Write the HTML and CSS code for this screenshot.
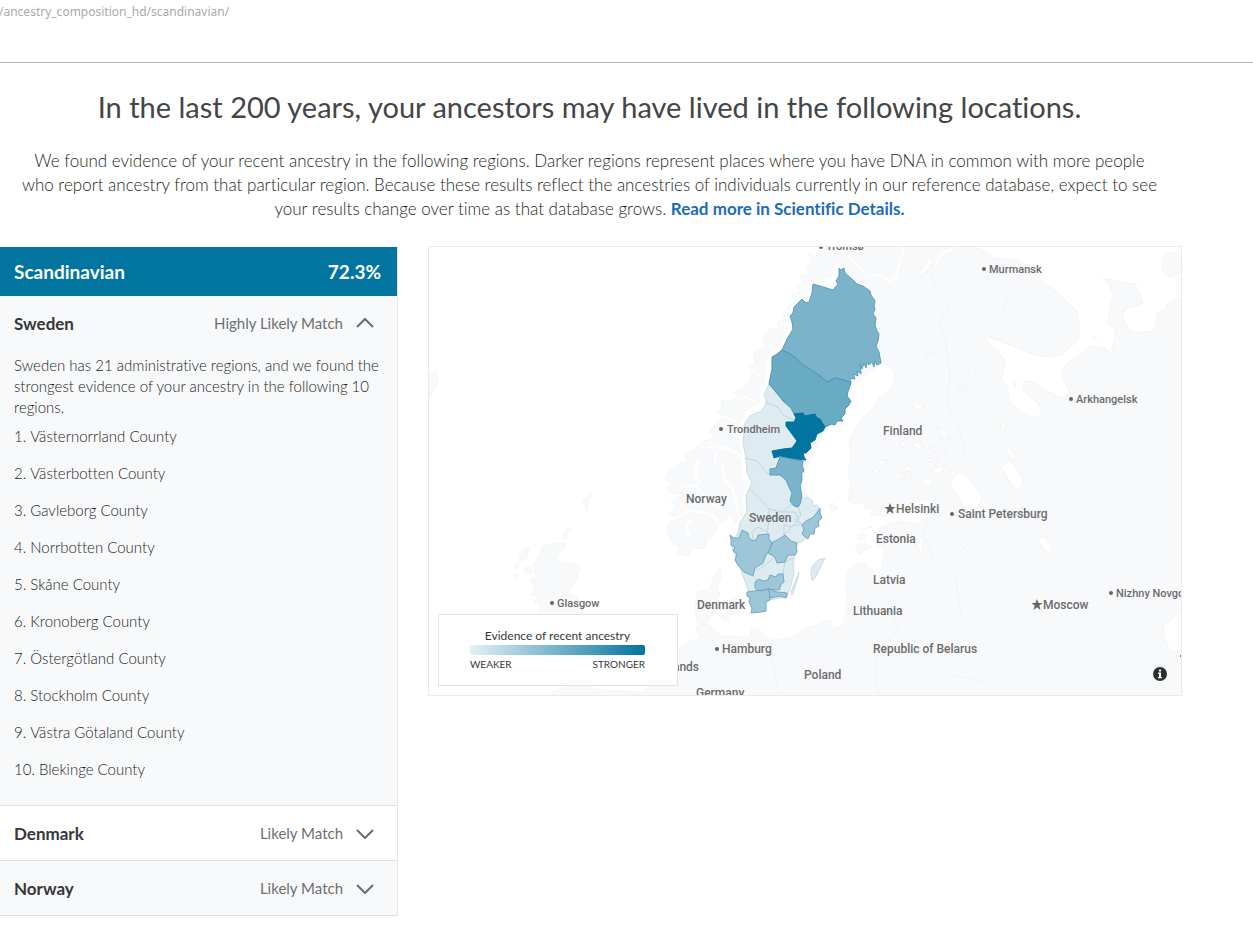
FILE: index.html
```
<!DOCTYPE html>
<html lang="en">
<head>
  <meta charset="UTF-8" />
  <title>Ancestry Composition - Scandinavian</title>
  <link rel="stylesheet" href="styles.css">
</head>
<body>
  <header class="topbar">
    <span class="path">/ancestry_composition_hd/scandinavian/</span>
  </header>

  <main class="page">
    <section class="intro">
      <h1>In the last 200 years, your ancestors may have lived in the following locations.</h1>
      <p>We found evidence of your recent ancestry in the following regions. Darker regions represent places where you have DNA in common with more people<br>
      who report ancestry from that particular region. Because these results reflect the ancestries of individuals currently in our reference database, expect to see<br>
      your results change over time as that database grows. <a href="#details">Read more in Scientific Details.</a></p>
    </section>

    <div class="columns">
      <!-- Country list -->
      <section class="populations">
        <h2 class="population-title"><span>Scandinavian</span><span>72.3%</span></h2>

        <div class="country shaded">
          <button class="country-toggle" type="button" aria-expanded="true">
            <span class="country-name">Sweden</span>
            <span class="match">Highly Likely Match</span>
            <svg class="chevron" viewBox="0 0 18 12"><path d="M1 10 9 2 17 10" /></svg>
          </button>
          <div class="country-body">
            <p>Sweden has 21 administrative regions, and we found the strongest evidence of your ancestry in the following 10 regions.</p>
            <ol>
              <li>Västernorrland County</li>
              <li>Västerbotten County</li>
              <li>Gavleborg County</li>
              <li>Norrbotten County</li>
              <li>Skåne County</li>
              <li>Kronoberg County</li>
              <li>Östergötland County</li>
              <li>Stockholm County</li>
              <li>Västra Götaland County</li>
              <li>Blekinge County</li>
            </ol>
          </div>
        </div>

        <div class="country">
          <button class="country-toggle" type="button" aria-expanded="false">
            <span class="country-name">Denmark</span>
            <span class="match">Likely Match</span>
            <svg class="chevron" viewBox="0 0 18 12"><path d="M1 3 9 11 17 3" /></svg>
          </button>
        </div>

        <div class="country shaded">
          <button class="country-toggle" type="button" aria-expanded="false">
            <span class="country-name">Norway</span>
            <span class="match">Likely Match</span>
            <svg class="chevron" viewBox="0 0 18 12"><path d="M1 3 9 11 17 3" /></svg>
          </button>
        </div>
      </section>

      <!-- Map -->
      <section class="map">
        <svg class="map-canvas" viewBox="429 247 752 448" role="img" aria-label="Map of northern Europe">
          <g class="land">
            <!-- Norway, Finland, Russia -->
            <path d="M832 240 826 248 829 253 820 251 816 257 808 254 811 262 806 267 810 273 800 276 804 283 797 287 800 293 791 294 796 301 788 306 790 314 783 311 785 320 777 322 779 330 770 328 765 334 762 340 766 346 758 350 753 353 755 362 749 368 752 374 749 382 743 389 734 392 737 398 727 402 721 400 722 408 717 413 724 418 714 424 709 432 715 438 703 441 698 446 692 451 685 455 687 461 677 465 668 472 665 480 674 483 666 488 672 494 682 494 671 501 676 507 669 514 678 517 668 524 667 534 672 543 680 546 678 553 689 556 693 549 705 548 708 539 716 532 718 524 725 520 730 512 738 527 750 580 790 590 800 540 815 510 800 480 830 420 855 385 881 363 888 365 893 371 894 382 889 391 880 397 873 408 862 419 855 430 849 440 851 454 848 470 851 484 848 500 854 504 862 502 866 509 875 508 870 514 883 516 895 512 905 505 914 503 930 498 937 504 928 511 935 516 925 518 918 524 904 521 891 523 882 527 874 533 874 544 884 550 882 567 878 576 869 568 866 563 857 563 848 571 846 583 847 596 846 614 843 625 832 630 831 620 818 624 806 628 792 637 775 640 765 637 758 627 751 630 750 638 737 636 720 636 713 627 702 623 696 628 700 638 687 642 680 648 673 650 665 655 670 670 655 680 640 695 640 700 1190 700 1190 240Z" />
            <path d="M697 592 710 589 713 578 720 568 721 577 717 588 720 594 715 602 716 613 707 619 708 626 697 622 695 607Z" />
            <path d="M724 604 735 598 744 602 739 613 728 615ZM720 615 730 618 726 622Z" />
            <!-- Scotland and islands -->
            <path d="M543 546 552 544 566 543 563 550 556 557 561 563 575 563 581 568 578 576 572 585 568 592 577 597 582 608 585 616 537 616 540 605 534 603 539 594 531 596 536 586 529 581 536 575 534 565 538 557Z" />
            <path d="M519 556 524 549 530 547 527 557 520 563ZM524 568 530 567 533 573 526 573ZM514 575 518 574 517 580ZM515 563 519 566 516 570ZM563 533 568 528 567 536 563 541ZM568 528 573 529 570 532ZM583 500 587 497 592 493 588 502 588 513 584 506Z" />
            <path d="M552 692 565 688 580 683 600 690 640 692 640 700 552 700ZM429 375 435 371 439 380 434 391 429 398Z" />
            <path d="M828 506 834 503 838 508 832 512ZM857 535 864 534 867 538 860 541ZM855 546 864 543 872 547 864 551 860 555Z" />
          </g>
          <g class="water">
            <path d="M975 247 983 251 990 253 993 258 1008 259 1020 261 1030 267 1037 274 1047 285 1062 296 1069 304 1077 311 1078 320 1080 329 1078 339 1072 346 1062 354 1050 357 1037 355 1027 352 1014 347 1000 341 988 337 982 329 976 325 984 335 990 346 998 351 1005 361 1002 379 1008 388 1008 401 1023 413 1035 418 1040 415 1042 409 1036 401 1028 396 1023 389 1024 382 1030 381 1047 391 1062 398 1070 393 1062 374 1066 364 1073 359 1082 354 1092 346 1107 349 1112 356 1112 347 1116 336 1114 328 1108 324 1110 310 1113 296 1110 286 1103 278 1120 282 1135 284 1139 292 1143 303 1134 306 1125 309 1122 317 1130 330 1137 333 1153 331 1156 324 1157 313 1167 309 1166 304 1182 298 1190 240 975 240Z" />
            <path d="M960 472 966 477 973 483 978 491 982 497 979 505 974 510 963 507 959 496 950 486 952 479ZM1002 445 1008 448 1013 453 1015 459 1013 461 1010 455 1006 450ZM1001 467 1008 461 1013 463 1017 471 1023 480 1022 486 1017 490 1010 482ZM1038 540 1044 536 1052 548 1050 554 1045 550ZM920 537 923 536 922 550 927 558 920 553 917 544ZM961 551 965 549 967 552 963 554ZM919 274 930 257 933 258 930 267 922 276ZM957 353 961 355 963 361 958 358ZM967 363 972 366 976 373 970 370ZM912 400 918 404 925 407 916 410ZM988 430 994 429 995 434 990 434ZM1000 418 1005 425 1006 431 1001 426ZM938 426 946 432 949 439 941 434Z" />
            <path d="M902 441 907 440 905 446 900 449ZM912 439 916 443 923 445 921 449 914 447ZM925 459 933 458 932 462 926 461ZM921 479 928 478 934 482 929 486 923 484ZM932 470 941 467 945 464 943 471 936 474ZM941 450 946 449 944 456ZM905 468 909 466 913 470 908 471ZM896 464 900 462 897 470 901 479 896 478ZM873 470 877 468 880 473 876 474ZM878 461 887 460 883 464 879 465ZM882 476 885 480 881 485Z" />
            <path d="M1181 610 1173 618 1163 627 1164 638 1170 650 1181 654Z" />
            <path class="island" d="M1162 262 1165 254 1175 252 1183 258 1180 273 1169 277 1162 271Z" />
          </g>
          <g class="fjord">
            <path class="border" d="M845 272 838 266 834 281 815 283 809 300 801 297 792 311 791 329 781 349 770 355 768 383 762 394 763 404 748 413 743 425 743 443 745 461 745 475 751 484 745 495 746 512 739 524 735 534" />
            <path d="M843 250 852 259 858 266 867 276 880 275 889 281 895 278 903 253 902 247M936 266 940 254 950 250 955 247" />
            <path d="M706 448 716 446 728 449 737 453 743 459M682 487 695 485 701 492 708 500 722 509M698 460 695 472 700 485M722 463 725 480 733 490 736 500 739 518M674 520 687 511 703 512 714 516 718 522M715 463 716 452M690 538 686 528 691 519M760 377 752 370 747 371M736 421 724 417 716 419M757 402 745 397 737 399M775 350 768 345M793 326 784 324M803 298 797 295" />
          </g>
          <g class="edge">
            <path d="M931 275 936 290 948 305 940 326 946 345 950 375 947 402 960 432 965 452 945 476M860 614 890 612 900 629 880 648 874 672 879 694M928 512 924 535 935 562 955 573 961 614M1000 295 1007 298 1003 311M972 335 978 340 968 344M925 355 938 350 927 358ZM955 385 970 385 962 393ZM773 640 772 660 779 694M950 675 975 679 998 686" />
            <path d="M1093 336 1097 337 1095 339ZM1013 382 1016 382 1015 387ZM1052 477 1049 484M1055 518 1061 523M860 530 872 527M908 452 900 457 897 462M921 434 918 440 923 442 921 446 928 449 936 446M936 450 932 455 938 460 935 465M902 480 906 476 903 472M912 482 909 474 915 477M888 470 885 466 880 468M1028 458 1030 452M940 437 945 443" />
          </g>

          <!-- Sweden -->
          <g class="weak">
            <path d="M769 384 764 395 767 402 762 411 750 416 745 423 743 443 746 458 747 473 752 483 746 495 747 512 740 522 738 532 731 545 740 567 748 590 756 604 768 600 787 597 791 585 794 573 793 562 796 551 797 543 803 541 812 532 820 520 820 510 817 505 814 506 812 500 806 497 798 507 803 470 803 455 795 414 783 401Z" />
            <path d="M812 567 818 560 825 558 820 568 815 578 812 581 811 574ZM799 572 797 582 792 595 791 592 796 579Z" />
          </g>
          <path class="county-lines" d="M765 402 778 407 783 415 794 420M745 458 757 461 766 472 771 475M750 489 762 501 769 509 782 512 792 504M769 509 769 520 767 534M753 541 752 532 758 527 767 532M782 512 795 512 799 520 792 527 784 525 784 535M798 507 801 515 795 520 804 525M784 535 793 525 803 525M775 557 764 566 756 571M793 558 785 562 783 574M753 576 758 581M783 574 780 590" />
          <path class="c1" d="M839 268 841 270 844 268 845 273 853 280 857 284 863 286 870 291 871 295 873 298 875 301 874 306 875 309 873 314 876 318 875 325 877 331 879 334 878 341 876 346 879 352 881 363 877 365 875 361 874 367 872 362 869 365 867 362 866 368 864 363 862 369 860 364 861 374 857 371 858 376 853 374 855 379 850 378 851 383 844 380 835 378 827 382 820 376 813 371 803 365 797 359 790 354 782 350 787 339 793 329 792 322 790 316 793 313 794 307 797 304 802 299 806 303 809 302 812 293 813 284 823 287 833 290 838 284 836 281 839 276Z" />
          <path class="c2" d="M782 350 777 354 772 357 772 369 769 384 775 391 780 397 783 401 791 408 794 414 803 413 805 416 815 414 817 418 820 419 825 427 832 424 835 425 837 421 843 421 841 418 845 414 845 409 849 405 851 401 847 396 848 391 851 383 844 380 835 378 827 382 820 376 813 371 803 365 797 359 790 354Z" />
          <path class="c3" d="M794 414 803 413 805 416 815 414 817 418 820 419 825 427 823 431 817 434 815 440 810 443 811 448 806 453 803 453 804 457 806 460 794 459 780 456 774 458 772 451 783 449 792 448 797 441 792 434 786 426 786 422 794 422 796 418Z" />
          <path class="c4" d="M780 457 803 461 802 465 804 471 801 473 802 480 800 485 802 497 800 504 798 507 794 506 790 501 792 493 788 485 786 480 780 475 770 475 770 469 776 468Z" />
          <path class="c5" d="M742 530 748 533 749 538 753 541 757 539 758 535 769 534 769 540 772 542 770 549 766 555 763 563 755 568 753 576 744 572 738 565 735 560 737 554 733 551 735 547 731 545 731 540 730 535 734 538 739 538ZM773 542 779 539 785 535 791 541 797 543 796 547 797 551 795 555 788 555 785 562 777 563 775 557 768 553ZM820 508 820 513 822 518 818 521 819 526 815 528 814 534 810 534 808 539 804 536 802 534 804 529 802 525 806 521 812 518 816 514ZM755 582 759 579 763 581 768 580 770 575 776 577 778 574 783 574 784 582 781 584 779 590 769 589 760 591 755 588ZM747 592 769 589 770 600 766 602 766 611 761 612 751 613 752 608 749 602 750 598 747 596ZM769 589 777 592 787 593 786 598 780 596 770 598Z" />

          <g class="labels">
            <text class="small" x="826" y="250">Tromsø</text>
            <text class="small" x="989" y="273">Murmansk</text>
            <text class="small" x="1076" y="403">Arkhangelsk</text>
            <text class="small" x="727" y="433">Trondheim</text>
            <text class="small" x="557" y="607">Glasgow</text>
            <text class="small" x="1116" y="597">Nizhny Novgorod</text>
            <text x="883" y="435">Finland</text>
            <text x="686" y="503">Norway</text>
            <text x="749" y="522">Sweden</text>
            <text x="896" y="513">Helsinki</text>
            <text x="958" y="518">Saint Petersburg</text>
            <text x="876" y="543">Estonia</text>
            <text x="873" y="584">Latvia</text>
            <text x="853" y="615">Lithuania</text>
            <text x="697" y="609">Denmark</text>
            <text x="722" y="653">Hamburg</text>
            <text x="873" y="653">Republic of Belarus</text>
            <text x="804" y="679">Poland</text>
            <text x="1043" y="609">Moscow</text>
            <text x="699" y="671" text-anchor="end">Netherlands</text>
            <text x="696" y="697">Germany</text>
          </g>
          <g class="cities">
            <circle cx="821" cy="247" r="2" />
            <circle cx="984" cy="269" r="2" />
            <circle cx="1071" cy="399" r="2" />
            <circle cx="721" cy="429" r="2" />
            <circle cx="552" cy="603" r="2" />
            <circle cx="1111" cy="593" r="2" />
            <circle cx="952" cy="514" r="2" />
            <circle cx="717" cy="649" r="2" />
            <circle cx="1181" cy="656" r="1" />
            <path d="M890 503 891.5 507H895.5L892.3 509.5 893.5 514 890 511.3 886.5 514 887.7 509.5 884.5 507H888.5ZM1037 599 1038.5 603H1042.5L1039.3 605.5 1040.5 610 1037 607.3 1033.5 610 1034.7 605.5 1031.5 603H1035.5Z" />
          </g>
        </svg>

        <div class="legend">
          <div class="legend-title">Evidence of recent ancestry</div>
          <div class="legend-bar"></div>
          <div class="legend-scale"><span>WEAKER</span><span>STRONGER</span></div>
        </div>

        <button class="info" type="button" aria-label="Map information">
          <svg viewBox="0 0 14 14"><circle cx="7" cy="7" r="7" /><path d="M6 2.5h2v2h-2zM5 5.5h3v4.5h1v1.2H5V10h1V6.700H5z" /></svg>
        </button>
      </section>
    </div>
  </main>
</body>
</html>
```
FILE: styles.css
```
* {
  box-sizing: border-box;
}

body {
  margin: 0;
  background: #fff;
  color: #363739;
  font-family: Lato, "Liberation Sans", sans-serif;
  font-variant-ligatures: none;
  overflow-x: hidden;
}

.topbar {
  height: 63px;
  border-bottom: 1px solid #aebabf;
}

.path {
  display: block;
  margin-left: -1px;
  color: #aaa;
  font: 12px/23px "Noto Sans", sans-serif;
}

.page {
  padding: 24px 71px 9px 0;
}

.intro {
  text-align: center;
  margin-bottom: 25px;
  padding-right: 3px;
}

h1 {
  margin: 0 0 22px;
  color: #444547;
  font-size: 29px;
  line-height: 40px;
  font-weight: 400;
}

.intro p {
  margin: 0;
  color: #1e1f21;
  font-size: 17px;
  font-weight: 300;
  line-height: 24px;
  white-space: nowrap;
}

.intro a {
  color: #1c6cb4;
  font-weight: 700;
  text-decoration: none;
}

.columns {
  display: grid;
  grid-template-columns: 398px 1fr;
  gap: 30px;
  align-items: start;
}

/* Country list */
.populations {
  padding-top: 1px;
  border-right: 1px solid #e4e6e8;
}

.population-title {
  display: flex;
  justify-content: space-between;
  margin: 0;
  padding: 0 16px 0 14px;
  background: #0274a0;
  color: #fff;
  font-size: 19px;
  line-height: 49px;
}

.country {
  border-bottom: 1px solid #e0e2e4;
}

.shaded {
  background: #f8f9fb;
}

.country-toggle {
  display: flex;
  align-items: center;
  width: 100%;
  height: 54px;
  padding: 0 23px 0 14px;
  border: 0;
  background: none;
  color: inherit;
  font: inherit;
  cursor: pointer;
}

.country-name {
  flex: 1;
  text-align: left;
  font-size: 17px;
  font-weight: 700;
}

.match {
  color: #6d6f72;
  font-size: 15px;
}

.chevron {
  width: 18px;
  height: 12px;
  margin-left: 13px;
  fill: none;
  stroke: #6a6c70;
  stroke-width: 2;
}

.country-body {
  padding: 5px 14px 17px;
  color: #1e1f21;
  font-size: 15px;
  font-weight: 300;
}

.country-body p {
  margin: 0;
  line-height: 21px;
}

.country-body ol {
  margin: 0;
  padding: 0;
  list-style-position: inside;
  line-height: 37px;
}

/* Map */
.map {
  position: relative;
  border: 1px solid #eaebec;
}

.map-canvas {
  display: block;
  width: 100%;
}

.land {
  fill: #f8f9fb;
  stroke: #f5f6f8;
}

.water {
  fill: #fff;
  stroke: #f3f4f6;
}

.island {
  fill: #f8f9fb;
}

.fjord {
  fill: none;
  stroke: #fff;
  stroke-width: 2;
}

.border {
  stroke-width: 5;
}

.edge {
  fill: none;
  stroke: #f2f3f5;
}

.weak {
  fill: #deebf0;
  stroke: #cbdde3;
}

.county-lines {
  fill: none;
  stroke: #c3d5dc;
}

.c1, .c4 {
  fill: #7bb3cb;
  stroke: #5a9fbb;
}

.c2 {
  fill: #6aabc4;
  stroke: #4b96b3;
}

.c3 {
  fill: #0274a0;
  stroke: #0274a0;
}

.c5 {
  fill: #9dc7d8;
  stroke: #6fabc2;
}

.labels {
  fill: #6c6c6c;
  font: 500 12px Roboto, sans-serif;
}

.small {
  font-size: 11px;
}

.cities {
  fill: #666;
}

.legend {
  position: absolute;
  left: 9px;
  bottom: 9px;
  width: 240px;
  padding: 11px 32px 12px 31px;
  background: #fff;
  border: 1px solid #e2e4e6;
}

.legend-title {
  font-size: 12px;
  line-height: 19px;
  text-align: center;
}

.legend-bar {
  height: 10px;
  border-radius: 2px;
  background: linear-gradient(to right, #e4f0f4, #0274a0);
}

.legend-scale {
  display: flex;
  justify-content: space-between;
  font-size: 10px;
  line-height: 18px;
}

.info {
  position: absolute;
  right: 14px;
  bottom: 14px;
  width: 14px;
  height: 14px;
  padding: 0;
  border: 0;
  border-radius: 50%;
  background: #fff;
  cursor: pointer;
}

.info svg {
  display: block;
  fill: #2e2f31;
}

.info path {
  fill: #fff;
}
```
